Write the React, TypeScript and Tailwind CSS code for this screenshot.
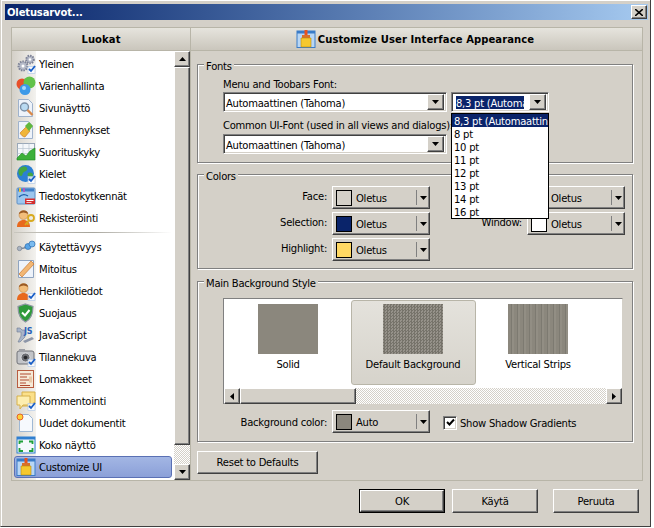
import React from "react";

const raised = "bg-[#d4d0c8] border border-t-white border-l-white border-r-[#404040] border-b-[#404040] shadow-[inset_-1px_-1px_0_#808080]";
const sunken = "border border-t-[#808080] border-l-[#808080] border-r-white border-b-white shadow-[inset_1px_1px_0_#404040,inset_-1px_-1px_0_#d4d0c8]";
const checker = "bg-[repeating-conic-gradient(#ffffff_0_25%,#d4d0c8_0_50%)] bg-[length:2px_2px]";
const headerBg = "bg-gradient-to-b from-[#e6e4dd] to-[#cac6bc] border-b border-[#b8b5a8]";

const CheckBox = () => (
    <>
        <rect x="12" y="12.500" width="7" height="7" fill="#ffffff" fillOpacity=".75" stroke="#a8c4e8" strokeWidth=".6" />
        <path d="M13 15l2 2 4-5" fill="none" stroke="#1a5fc8" strokeWidth="1.800" />
    </>
);

const Person = ({ color = "#e8691e" }: { color?: string }) => (
    <>
        <path d="M1 19c0-5 3-7 6.500-7s6.500 2 6.500 7z" fill={color} />
        <circle cx="7.500" cy="7" r="4.500" fill="#f2bd7a" stroke="#b87a3a" strokeWidth=".5" />
        <path d="M3 6c0-4 9-5 9 0-3-2-6-2-9 0z" fill="#9a5a24" />
    </>
);

const icons: Record<string, React.ReactNode> = {
    gears: (
        <>
            <circle cx="7" cy="12" r="4.500" fill="#b5bac8" stroke="#7d8296" strokeWidth="2" strokeDasharray="1.500 1" />
            <circle cx="7" cy="12" r="1.500" fill="#fff" />
            <circle cx="14" cy="5.500" r="3.800" fill="#b5bac8" stroke="#7d8296" strokeWidth="2" strokeDasharray="1.500 1" />
            <circle cx="14" cy="5.500" r="1.200" fill="#fff" />
            <CheckBox />
        </>
    ),
    colors: (
        <>
            <circle cx="6" cy="8" r="5.500" fill="#e8502a" />
            <circle cx="13.500" cy="6.500" r="6" fill="#62c24a" />
            <circle cx="9" cy="13.500" r="5.500" fill="#3d9ae8" />
            <circle cx="8" cy="12" r="2" fill="#a8d8fa" />
        </>
    ),
    preview: (
        <>
            <path d="M2.500 1.500h10l4 4v13h-14z" fill="#eef3fa" stroke="#9fb2cc" />
            <circle cx="8.500" cy="9" r="4" fill="#b9daf2" stroke="#7b8fa6" strokeWidth="1.400" />
            <path d="M11.500 12l5 5" stroke="#d9884a" strokeWidth="2.400" />
        </>
    ),
    smooth: (
        <>
            <path d="M2.500 1.500h10l4 4v13h-14z" fill="#eef3fa" stroke="#9fb2cc" />
            <path d="M4 13l6-6 4 4-5 6c-2 0-4-2-5-4z" fill="#efb53a" stroke="#c8741e" strokeWidth=".6" />
            <path d="M9 6l4-4 4 4-4 5z" fill="#62b83c" />
        </>
    ),
    chart: (
        <>
            <rect x="1.500" y="1.500" width="17" height="16" fill="#f4f7fa" stroke="#9aa8b8" />
            <path d="M1.500 6.500h17M1.500 11.500h17M7 1.500v16M13 1.500v16" stroke="#b9c4d0" strokeWidth=".7" />
            <path d="M1 16l5-5 4 3 4-5 5-3v12H1z" fill="#3db03a" stroke="#1f8a22" strokeWidth=".6" />
        </>
    ),
    globe: (
        <>
            <circle cx="9.500" cy="9.500" r="8.500" fill="#2b7fd4" />
            <path d="M4 4c3-2 6-2 7 0s-1 3-3 4-1 4-3 4-4-5-1-8zM12 9c3-1 5 0 5 2s-3 4-4 3-2-4-1-5z" fill="#45a640" />
            <CheckBox />
        </>
    ),
    assoc: (
        <>
            <rect x="1" y="2" width="18" height="16" rx="1" fill="#9cc6ee" stroke="#5f8fc4" />
            <rect x="2" y="2.500" width="16" height="3" fill="#3f7fc8" />
            <path d="M3 2h2v4H3z" fill="#e8c23a" />
            <path d="M7 2h2v4H7z" fill="#b05ac0" />
            <path d="M3 11c3-3 6-3 9-1" fill="none" stroke="#1d5fa8" strokeWidth="1.400" />
            <rect x="9" y="12.500" width="10" height="5.500" fill="#d42f2f" />
            <path d="M10.500 14h7v1h-7zM10.500 16h5v.8h-5z" fill="#fff" />
        </>
    ),
    register: (
        <>
            <Person />
            <circle cx="15" cy="10" r="3" fill="none" stroke="#d8aa20" strokeWidth="1.800" />
            <path d="M13 12l-4 5M10.500 15l2 1.500" stroke="#d8aa20" strokeWidth="1.600" />
        </>
    ),
    usability: (
        <>
            <path d="M2 12l6-1 6-4" fill="none" stroke="#7d8a9c" strokeWidth="1.600" />
            <circle cx="3.500" cy="11.500" r="2.200" fill="#aab4c2" stroke="#6d7786" strokeWidth=".6" />
            <circle cx="12" cy="9.500" r="3" fill="#58a4e6" stroke="#2e6eb0" strokeWidth=".7" />
            <circle cx="16" cy="7" r="3" fill="#7cbcf0" stroke="#2e6eb0" strokeWidth=".7" />
        </>
    ),
    sizing: (
        <>
            <path d="M2.500 1.500h15v17h-15z" fill="#eef3fa" stroke="#8fa4c0" />
            <path d="M3 15L15 2l3 3L6 18z" fill="#f2b774" stroke="#c87830" strokeWidth=".7" />
        </>
    ),
    personal: (
        <>
            <Person />
            <CheckBox />
        </>
    ),
    security: (
        <>
            <path d="M9.500 1l7.500 2.500c0 8-2 12.500-7.500 15.500C4 16 2 11.500 2 3.500z" fill="#2f9a3a" stroke="#8c96a2" strokeWidth="1.200" />
            <path d="M6 9.500l3 3 4.500-5.500" fill="none" stroke="#fff" strokeWidth="2" />
        </>
    ),
    script: (
        <>
            <path d="M1 3h3l2 2h3v7l-5 5H2l3-6V7H1z" fill="#a8b4c8" stroke="#6d7a90" strokeWidth=".6" />
            <text x="8" y="9" fontFamily="DejaVu Sans" fontSize="8" fontWeight="700" fill="#2a62b8">JS</text>
            <path d="M7 16l9-4 2 2-9 4z" fill="#8d96a8" />
        </>
    ),
    camera: (
        <>
            <rect x="1" y="4" width="17" height="13" rx="2" fill="#c2c4c8" stroke="#707278" />
            <rect x="3" y="2" width="6" height="3" fill="#9c9ea4" />
            <circle cx="9.500" cy="10.500" r="4.500" fill="#6c6e74" stroke="#dcdde0" />
            <circle cx="9.500" cy="10.500" r="1.800" fill="#25262a" />
            <CheckBox />
        </>
    ),
    forms: (
        <>
            <rect x="1.500" y="1.500" width="16" height="17" fill="#f6ead8" stroke="#b85c40" />
            <path d="M4 5h11M4 8h7M4 11h9M4 14h6M4 16.500h10" stroke="#b04830" strokeWidth="1.200" />
            <path d="M13 7.500h3v6h-3z" fill="#e8c8a8" />
        </>
    ),
    comments: (
        <>
            <path d="M6 1h13v11h-2v3H6z" fill="#fbe08a" stroke="#d6b04a" />
            <path d="M1 5h13v9H7l-3 4v-4H1z" fill="#fdeeb0" stroke="#d6b04a" />
            <CheckBox />
        </>
    ),
    newdoc: (
        <>
            <path d="M3.500 1.500h9l4 4v13h-13z" fill="#f6f9fd" stroke="#9fb8d4" />
            <circle cx="4" cy="4" r="3" fill="#fbd23a" stroke="#e8602a" />
        </>
    ),
    fullscreen: (
        <>
            <rect x="1" y="2" width="18" height="16" fill="#f4f8fc" stroke="#2f7fd0" />
            <rect x="1" y="2" width="18" height="2.500" fill="#2f7fd0" />
            <path d="M3.500 9V6.500H7M13 6.500h3.500V9M3.500 13v3H7M13 16h3.500v-3" fill="none" stroke="#1fa03a" strokeWidth="1.800" />
        </>
    ),
    customize: (
        <>
            <rect x="1" y="2" width="18" height="16.500" fill="#b8d6f4" stroke="#3a7cc8" />
            <rect x="1" y="2" width="18" height="2.500" fill="#3a7cc8" />
            <path d="M8.500 1h3v5h-3z" fill="#e8521e" />
            <path d="M6 6h8v3H6z" fill="#d8702a" />
            <path d="M5 9h10v9H5z" fill="#f5c82e" stroke="#b88a10" strokeWidth=".6" />
        </>
    ),
};

const Icon = ({ name }: { name: string }) => (
    <svg width="20" height="20" viewBox="0 0 20 20" className="shrink-0">
        {icons[name]}
    </svg>
);

const groupOne = [
    ["gears", "Yleinen"],
    ["colors", "Värienhallinta"],
    ["preview", "Sivunäyttö"],
    ["smooth", "Pehmennykset"],
    ["chart", "Suorituskyky"],
    ["globe", "Kielet"],
    ["assoc", "Tiedostokytkennät"],
    ["register", "Rekisteröinti"],
];

const groupTwo = [
    ["usability", "Käytettävyys"],
    ["sizing", "Mitoitus"],
    ["personal", "Henkilötiedot"],
    ["security", "Suojaus"],
    ["script", "JavaScript"],
    ["camera", "Tilannekuva"],
    ["forms", "Lomakkeet"],
    ["comments", "Kommentointi"],
    ["newdoc", "Uudet dokumentit"],
    ["fullscreen", "Koko näyttö"],
];

const Row = ({ icon, label, selected }: { icon: string; label?: string; selected?: boolean }) => (
    <div className={"relative flex items-center h-[22px] pl-[4px] gap-[3px] " + (selected ? "z-0" : "")}>
        {selected && (
            <div className="absolute left-[2px] right-[2px] top-0 bottom-0 -z-10 rounded-[3px] border border-[#5a70b4] bg-gradient-to-b from-[#a3b6e4] to-[#8ba0d8]" />
        )}
        <Icon name={icon} />
        {label && <span className="whitespace-nowrap">{label}</span>}
    </div>
);

const Arrow = ({ dir = "down" }: { dir?: "up" | "down" | "left" | "right" }) => {
    const points = { up: "0,4 7,4 3.500,0", down: "0,0 7,0 3.500,4", left: "4,0 4,7 0,3.500", right: "0,0 0,7 4,3.500" }[dir];
    const vertical = dir === "up" || dir === "down";
    return (
        <svg width={vertical ? 7 : 4} height={vertical ? 4 : 7} viewBox={vertical ? "0 0 7 4" : "0 0 4 7"}>
            <polygon points={points} fill="#000" />
        </svg>
    );
};

const Combo = ({ text, width, selectedText }: { text: string; width: string; selectedText?: boolean }) => (
    <div className={sunken + " flex items-center h-[20px] bg-white pl-[2px] pr-[2px] " + width}>
        <div className="flex-1 whitespace-nowrap">
            {selectedText ? (
                <span className="block w-[68px] h-[13px] leading-[15px] ml-[2px] bg-[#0a246a] text-white">{text}</span>
            ) : (
                <span className="block h-[13px] leading-[15px]">{text}</span>
            )}
        </div>
        <div className={raised + " flex items-center justify-center w-[17px] h-[16px] shrink-0"}>
            <Arrow />
        </div>
    </div>
);

const ColorButton = ({ swatch, text = "Oletus" }: { swatch: string; text?: string }) => (
    <div className={raised + " flex items-center h-[23px] w-[98px] pl-[3px] shrink-0"}>
        <div className={"w-[16px] h-[16px] mt-[1px] border border-black shrink-0 " + swatch} />
        <span className="ml-[4px] mt-[2px] flex-1">{text}</span>
        <div className="w-px h-[15px] bg-[#808080]" />
        <div className="w-[12px] flex justify-center">
            <Arrow />
        </div>
    </div>
);

const Group = ({ title, className, children }: { title: string; className: string; children: React.ReactNode }) => (
    <div className={"relative border border-[#808080] shadow-[inset_1px_1px_0_#ffffff,1px_1px_0_#ffffff] " + className}>
        <span className="absolute left-[6px] top-[-5px] bg-[#d4d0c8] px-[2px] leading-[13px]">{title}</span>
        {children}
    </div>
);

const Button = ({ children, className }: { children: React.ReactNode; className: string }) => (
    <div className={raised + " flex items-center justify-center " + className}>{children}</div>
);

const VBar = () => (
    <div className="flex flex-col w-[16px] shrink-0">
        <div className={raised + " h-[16px] flex items-center justify-center"}>
            <Arrow dir="up" />
        </div>
        <div className={raised + " h-[378px]"} />
        <div className={checker + " flex-1"} />
        <div className={raised + " h-[16px] flex items-center justify-center"}>
            <Arrow />
        </div>
    </div>
);

const Thumb = ({ pattern }: { pattern: string }) => <div className={"w-[60px] h-[50px] mt-[3px] " + pattern} />;

const sizes = ["8 pt", "10 pt", "11 pt", "12 pt", "13 pt", "14 pt", "16 pt"];

export default function App() {
    return (
        <div className="w-[654px] h-[528px] bg-white font-['DejaVu_Sans',sans-serif] text-[10px] leading-[13px] text-black tracking-[-0.25px]">
            <div className="flex flex-col w-[651px] h-[527px] bg-[#d4d0c8] border-r border-b border-l border-[#404040] border-l-[#d4d0c8] pt-[4px] pl-[4px] pr-[2px] shadow-[inset_1px_1px_0_#ffffff]">
                {/* title bar */}
                <div className="flex items-center justify-between h-[16px] shrink-0 pl-[2px] pr-[1px] bg-gradient-to-r from-[#0a246a] to-[#a6caf0]">
                    <span className="font-bold text-white tracking-[-0.15px]">Oletusarvot...</span>
                    <div className={raised + " flex items-center justify-center w-[16px] h-[14px]"}>
                        <svg width="8" height="7" viewBox="0 0 8 7">
                            <path d="M0 0l8 7M8 0L0 7" stroke="#000" strokeWidth="1.600" />
                        </svg>
                    </div>
                </div>

                <div className="flex ml-[6px] mt-[7px] w-[632px] h-[454px] shrink-0 border border-[#b8b5a8]">
                    {/* left column */}
                    <div className="flex flex-col w-[179px] shrink-0 border-r border-[#b8b5a8]">
                        <div className={headerBg + " h-[23px] shrink-0 flex items-center justify-center font-bold tracking-[0.1px]"}>Luokat</div>
                        <div className="flex flex-1 min-h-0">
                            <div className="relative z-0 flex-1 overflow-hidden pt-[2px] bg-[linear-gradient(90deg,#d4d0c8_0,#f3f2ef_24px,#ffffff_24px)]">
                                {groupOne.map(([icon, label]) => (
                                    <Row key={label} icon={icon} label={label} />
                                ))}
                                <div className="h-[7px] flex items-center px-[2px]">
                                    <div className="h-px w-full bg-gradient-to-r from-[#c8c6be] via-[#a8a69e] to-white" />
                                </div>
                                {groupTwo.map(([icon, label]) => (
                                    <Row key={label} icon={icon} label={label} />
                                ))}
                                <Row icon="customize" label="Customize UI" selected />
                                <Row icon="fullscreen" />
                            </div>
                            <VBar />
                        </div>
                    </div>

                    {/* right column */}
                    <div className="flex flex-col flex-1 min-w-0">
                        <div className={headerBg + " h-[23px] shrink-0 flex items-center justify-center gap-[2px] font-bold tracking-[0.1px] pr-[3px]"}>
                            <Icon name="customize" />
                            <span>Customize User Interface Appearance</span>
                        </div>
                        <div className="flex flex-col pl-[6px] pt-[13px]">
                            <Group title="Fonts" className="w-[436px] h-[99px] pl-[25px] pt-[13px]">
                                <div className="h-[14px]">Menu and Toobars Font:</div>
                                <div className="flex gap-[4px]">
                                    <Combo text="Automaattinen (Tahoma)" width="w-[224px]" />
                                    <Combo text="8,3 pt (Automa" width="w-[98px]" selectedText />
                                </div>
                                <div className="h-[13px] mt-[7px] whitespace-nowrap">Common UI-Font (used in all views and dialogs):</div>
                                <div className="mt-[2px]">
                                    <Combo text="Automaattinen (Tahoma)" width="w-[224px]" />
                                </div>
                                <div className="absolute left-[253px] top-[48px] z-10 w-[98px] border border-black bg-white">
                                    <div className="h-[13px] leading-[15px] pl-[2px] bg-[#0a246a] text-white whitespace-nowrap">8,3 pt (Automaattin</div>
                                    {sizes.map((size) => (
                                        <div key={size} className="h-[13px] leading-[15px] pl-[2px]">{size}</div>
                                    ))}
                                </div>
                            </Group>

                            <Group title="Colors" className="w-[436px] h-[95px] mt-[11px] pt-[11px]">
                                <div className="flex flex-col gap-[3px]">
                                    <div className="flex items-center">
                                        <span className="w-[129px] -mt-[2px] text-right mr-[5px]">Face:</span>
                                        <ColorButton swatch="bg-[#d4d0c8]" />
                                        <span className="w-[97px]" />
                                        <ColorButton swatch="bg-white" />
                                    </div>
                                    <div className="flex items-center">
                                        <span className="w-[129px] -mt-[2px] text-right mr-[5px]">Selection:</span>
                                        <ColorButton swatch="bg-[#0a246a]" />
                                        <span className="w-[92px] -mt-[2px] text-right mr-[5px]">Window:</span>
                                        <ColorButton swatch="bg-white" />
                                    </div>
                                    <div className="flex items-center">
                                        <span className="w-[129px] -mt-[2px] text-right mr-[5px]">Highlight:</span>
                                        <ColorButton swatch="bg-[#ffd863]" />
                                    </div>
                                </div>
                            </Group>

                            <Group title="Main Background Style" className="w-[436px] h-[161px] mt-[12px] pt-[16px]">
                                <div className="ml-[25px] w-[400px] h-[106px] flex flex-col bg-white border-t border-l border-[#808080] border-r border-r-[#d4d0c8]">
                                    <div className="flex flex-1 pl-[2px] pt-[2px]">
                                        <div className="w-[125px] h-[85px] pr-[1px] flex flex-col items-center">
                                            <Thumb pattern="bg-[#8b877d]" />
                                            <span className="mt-[4px]">Solid</span>
                                        </div>
                                        <div className="w-[125px] h-[85px] pr-[1px] flex flex-col items-center rounded-[3px] border border-[#b8b5a8] bg-gradient-to-b from-[#e4e2dc] to-[#d6d3cb] -mt-px">
                                            <Thumb pattern="bg-[#8b877d] bg-[repeating-conic-gradient(#76736a_0_25%,#96928a_0_50%)] bg-[length:3px_3px]" />
                                            <span className="mt-[4px]">Default Background</span>
                                        </div>
                                        <div className="w-[125px] h-[85px] pr-[1px] flex flex-col items-center">
                                            <Thumb pattern="bg-[repeating-linear-gradient(90deg,#8b877d_0_3px,#7d7a71_3px_4px,#928e84_4px_6px)]" />
                                            <span className="mt-[4px]">Vertical Strips</span>
                                        </div>
                                    </div>
                                    <div className="flex h-[16px] shrink-0">
                                        <div className={raised + " w-[16px] flex items-center justify-center"}>
                                            <Arrow dir="left" />
                                        </div>
                                        <div className={raised + " w-[116px]"} />
                                        <div className={checker + " flex-1"} />
                                        <div className={raised + " w-[16px] flex items-center justify-center"}>
                                            <Arrow dir="right" />
                                        </div>
                                    </div>
                                </div>
                                <div className="flex items-center mt-[6px]">
                                    <span className="w-[129px] mt-[2px] text-right mr-[5px]">Background color:</span>
                                    <ColorButton swatch="bg-[#8b877d]" text="Auto" />
                                    <div className={sunken + " ml-[13px] mt-[2px] w-[14px] h-[14px] bg-white flex items-center justify-center"}>
                                        <svg width="9" height="9" viewBox="0 0 9 9">
                                            <path d="M1 4l2.500 2.500L8 1.500" fill="none" stroke="#000" strokeWidth="2" />
                                        </svg>
                                    </div>
                                    <span className="ml-[3px] mt-[4px]">Show Shadow Gradients</span>
                                </div>
                            </Group>

                            <Button className="w-[121px] h-[23px] mt-[9px]">Reset to Defaults</Button>
                        </div>
                    </div>
                </div>

                {/* footer */}
                <div className="flex justify-end mt-[8px] pr-[9px]">
                    <div className="border border-black mr-[7px]">
                        <Button className="w-[84px] h-[22px]">OK</Button>
                    </div>
                    <Button className="w-[86px] h-[24px] mr-[15px]">Käytä</Button>
                    <Button className="w-[86px] h-[24px]">Peruuta</Button>
                </div>
            </div>
        </div>
    );
}
